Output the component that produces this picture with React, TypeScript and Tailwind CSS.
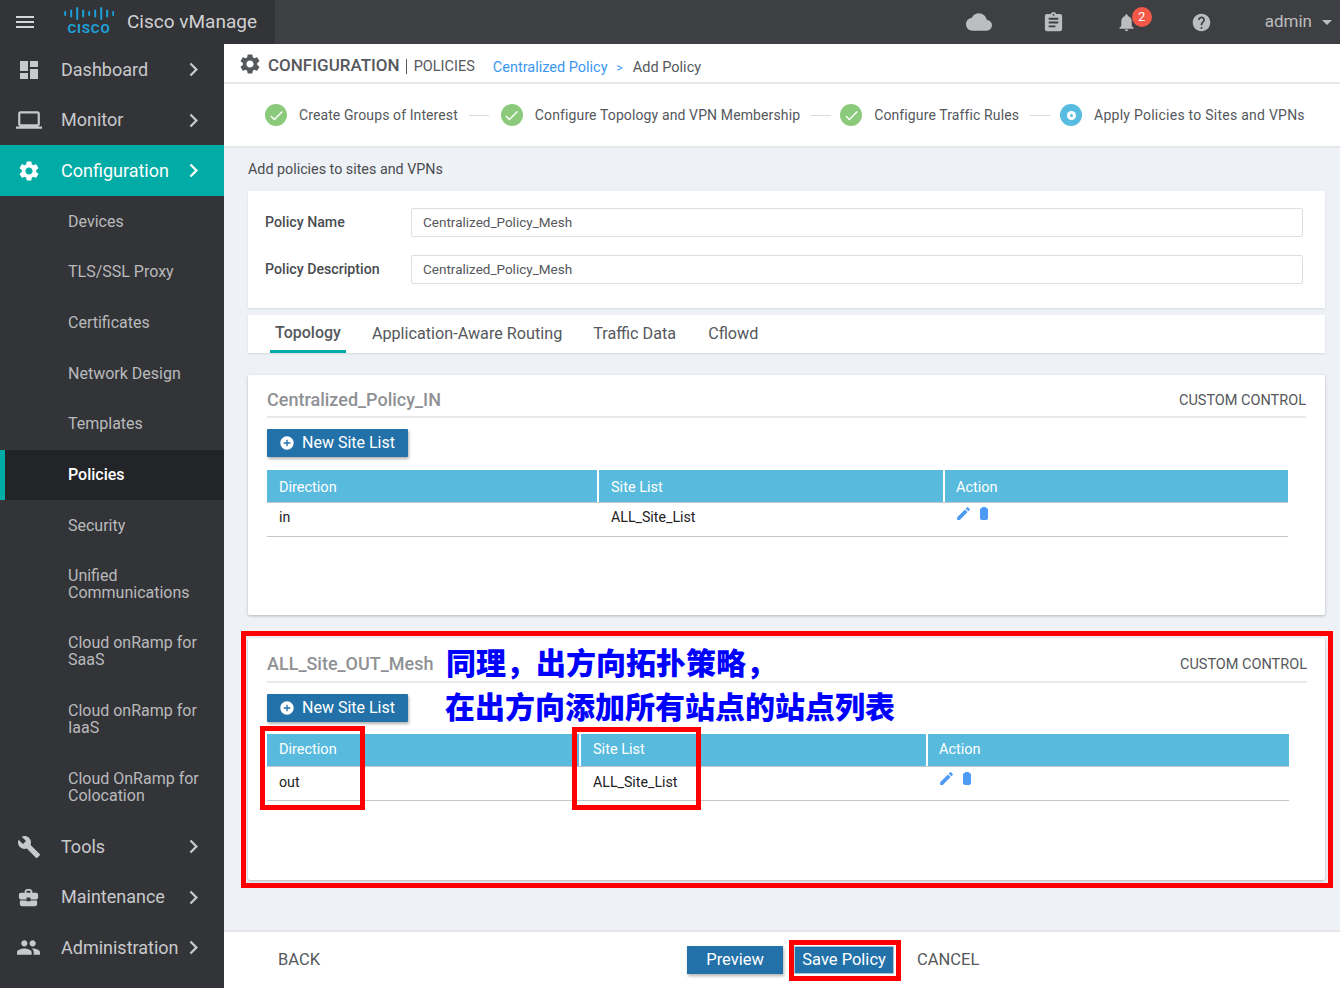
import {
  MdAddCircle,
  MdArrowDropDown,
  MdAssignment,
  MdBuild,
  MdBusinessCenter,
  MdCheck,
  MdChevronRight,
  MdCloud,
  MdDashboard,
  MdEdit,
  MdHelp,
  MdLaptop,
  MdMenu,
  MdNotifications,
  MdPeople,
  MdSettings,
} from "react-icons/md";

const fontStack = "font-['Roboto','Noto_Sans_CJK_SC',sans-serif]";

const subItems = [
  { label: "Devices", h: "h-[50px]" },
  { label: "TLS/SSL Proxy", h: "h-[51px]" },
  { label: "Certificates", h: "h-[51px]" },
  { label: "Network Design", h: "h-[50px]" },
  { label: "Templates", h: "h-[52px] pb-[2px]" },
  { label: "Policies", h: "h-[50px] pb-[2px]", active: true },
  { label: "Security", h: "h-[51px]" },
  { label: "Unified Communications", h: "h-[66px]" },
  { label: "Cloud onRamp for SaaS", h: "h-[68px]" },
  { label: "Cloud onRamp for IaaS", h: "h-[68px]" },
  { label: "Cloud OnRamp for Colocation", h: "h-[68px]" },
];

const steps = [
  { label: "Create Groups of Interest", done: true, gap: "mr-[12px]", track: "tracking-[0.1px]" },
  { label: "Configure Topology and VPN Membership", done: true, gap: "mr-[9px]", track: "tracking-[0.12px]" },
  { label: "Configure Traffic Rules", done: true, gap: "mr-[10px]", track: "tracking-[0.12px]" },
  { label: "Apply Policies to Sites and VPNs", done: false, gap: "", track: "tracking-[0.25px]" },
];

function CiscoLogo() {
  const bars = [5, 8, 13, 8, 5, 8, 13, 8, 5];
  return (
    <div className="flex w-[50px] flex-col items-center">
      <svg width="50" height="15" viewBox="0 0 50 15" className="block">
        {bars.map((h, i) => (
          <rect key={i} x={i * 6 + 0.2} y={7.5 - h / 2} width="2" height={h} rx="1" fill="#1ba0d7" />
        ))}
      </svg>
      <span className="text-[13.5px] leading-[14px] font-bold tracking-[0.8px] text-[#1ba0d7]">CISCO</span>
    </div>
  );
}

function TrashIcon() {
  return (
    <svg width="10" height="13" viewBox="0 0 10 13" className="block">
      <path d="M1 2.5 Q1 1 2.5 1 H3 V0 H7 V1 H7.5 Q9 1 9 2.5 V11 Q9 13 7 13 H3 Q1 13 1 11 Z" fill="#4e9bf5" />
    </svg>
  );
}

function MainItem({ label, icon, active, tall }: { label: string; icon: React.ReactNode; active?: boolean; tall?: boolean }) {
  return (
    <div className={`flex items-center ${tall ? "h-[51px]" : "h-[50px]"} ${active ? "bg-[#00aca5] text-white" : "text-[#c8c9cb]"}`}>
      <div className="flex w-[61px] justify-center pr-[4px]">{icon}</div>
      <span className="w-[123px] text-[18px] leading-none whitespace-nowrap">{label}</span>
      <MdChevronRight size={27} className="ml-[-4px]" />
    </div>
  );
}

function Sidebar() {
  return (
    <aside className="flex h-[944px] w-[224px] shrink-0 flex-col bg-[#333438]">
      <MainItem label="Dashboard" tall icon={<MdDashboard size={24} />} />
      <MainItem label="Monitor" icon={<MdLaptop size={26} />} />
      <MainItem label="Configuration" active tall icon={<MdSettings size={24} />} />
      {subItems.map((item) => (
        <div
          key={item.label}
          className={`flex items-center pr-[20px] ${item.h} ${
            item.active ? "border-l-[5px] border-[#00aca5] bg-[#232427] pl-[63px] font-medium text-white" : "pl-[68px] text-[#b9babc]"
          }`}
        >
          <span className="text-[16px] leading-[17px]">{item.label}</span>
        </div>
      ))}
      <MainItem label="Tools" tall icon={<MdBuild size={24} />} />
      <MainItem label="Maintenance" icon={<MdBusinessCenter size={23} />} />
      <MainItem label="Administration" tall icon={<MdPeople size={25} />} />
    </aside>
  );
}

function TopBar() {
  return (
    <header className="flex h-[44px] items-center bg-[#3e3f42] text-[#bcbdbf]">
      <div className="flex h-full w-[275px] items-center bg-[#333438]">
        <MdMenu size={24} className="ml-[13px] text-[#d5d6d7]" />
        <div className="mb-[4px] ml-[27px]">
          <CiscoLogo />
        </div>
        <span className="ml-[13px] text-[19px] whitespace-nowrap text-[#d0d1d2]">Cisco vManage</span>
      </div>
      <div className="flex-1" />
      <MdCloud size={26} className="mr-[50px]" />
      <MdAssignment size={23} className="mr-[51px]" />
      <div className="relative mr-[54px]">
        <MdNotifications size={21} />
        <span className="absolute left-[16px] top-[-5px] flex h-[20px] w-[20px] items-center justify-center rounded-full bg-[#f35746] text-[13px] text-white">
          2
        </span>
      </div>
      <MdHelp size={21} className="mr-[53px]" />
      <span className="text-[17px]">admin</span>
      <MdArrowDropDown size={24} className="ml-[3px] mr-[1px]" />
    </header>
  );
}

function Stepper() {
  return (
    <div className="flex h-[64px] items-center border-b-2 border-[#e6e7e9] bg-white pl-[41px] text-[14px] text-[#55585c]">
      {steps.map((step, i) => (
        <div key={step.label} className="flex items-center">
          {step.done ? (
            <span className="flex h-[22px] w-[22px] items-center justify-center rounded-full bg-[#8bc97b]">
              <MdCheck size={17} className="text-white" />
            </span>
          ) : (
            <span className="flex h-[22px] w-[22px] items-center justify-center rounded-full bg-[#57bcdf]">
              <span className="flex h-[9px] w-[9px] items-center justify-center rounded-full bg-white">
                <span className="h-[3px] w-[3px] rounded-full bg-[#57bcdf]" />
              </span>
            </span>
          )}
          <span className={`ml-[12px] whitespace-nowrap ${step.track}`}>{step.label}</span>
          {i < steps.length - 1 && <span className={`ml-[11px] h-px w-[20px] bg-[#d9dadc] ${step.gap}`} />}
        </div>
      ))}
    </div>
  );
}

function PolicyField({ label, value }: { label: string; value: string }) {
  return (
    <div className="flex items-center">
      <label className="w-[146px] text-[14.2px] font-medium text-[#4a4c50]">{label}</label>
      <div className="flex h-[29px] flex-1 items-center rounded-[2px] border border-[#dcdee1] px-[11px] text-[13.5px] text-[#55585c]">
        {value}
      </div>
    </div>
  );
}

function NewSiteListButton() {
  return (
    <button className="flex h-[28px] w-[141px] items-center rounded-[1px] bg-[#2272a9] pl-[12px] text-[16px] text-white shadow-[1px_2px_3px_rgba(0,0,0,0.3)]">
      <MdAddCircle size={16} />
      <span className="ml-[7px]">New Site List</span>
    </button>
  );
}

function PolicyTable({
  direction,
  col1,
  col2,
  width,
  iconPad,
  headPad,
  rowPad,
}: {
  direction: string;
  col1: string;
  col2: string;
  width: string;
  iconPad: string;
  headPad: string;
  rowPad: string;
}) {
  return (
    <div className={`${width} text-[14.2px]`}>
      <div className="flex h-[33px] border-b border-[#c4c6c8] bg-[#58bbdd] text-[14.5px] text-white">
        <div className={`${col1} ${headPad} flex items-center border-r-2 border-white pl-[12px]`}>Direction</div>
        <div className={`${col2} ${headPad} flex items-center border-r-2 border-white pl-[12px]`}>Site List</div>
        <div className={`${headPad} flex flex-1 items-center pl-[11px]`}>Action</div>
      </div>
      <div className="flex h-[34px] border-b border-[#c4c6c8] text-[#222]">
        <div className={`${col1} ${rowPad} flex items-center pl-[12px]`}>{direction}</div>
        <div className={`${col2} ${rowPad} flex items-center pl-[12px]`}>ALL_Site_List</div>
        <div className={`flex flex-1 items-start gap-[7px] pl-[10px] ${iconPad}`}>
          <MdEdit size={17} className="text-[#4e9bf5]" />
          <span className="mt-[2px]">
            <TrashIcon />
          </span>
        </div>
      </div>
    </div>
  );
}

function TopologyCard({
  title,
  direction,
  col1,
  col2,
  tableWidth,
  cardClass,
  headClass,
  buttonRow,
  iconPad,
  headPad,
  rowPad,
}: {
  title: string;
  direction: string;
  col1: string;
  col2: string;
  tableWidth: string;
  cardClass: string;
  headClass: string;
  buttonRow: string;
  iconPad: string;
  headPad: string;
  rowPad: string;
}) {
  return (
    <section className={`rounded-[2px] bg-white pl-[19px] shadow-[0_1px_3px_rgba(0,0,0,0.25)] ${cardClass}`}>
      <div className={`flex items-center justify-between border-b-2 border-[#e8e9eb] ${headClass}`}>
        <h2 className="pt-px text-[18px] font-medium text-[#8f9194]">{title}</h2>
        <span className="mt-[4px] text-[14.5px] text-[#55585c]">CUSTOM CONTROL</span>
      </div>
      <div className={buttonRow}>
        <NewSiteListButton />
      </div>
      <PolicyTable
        direction={direction}
        col1={col1}
        col2={col2}
        width={tableWidth}
        iconPad={iconPad}
        headPad={headPad}
        rowPad={rowPad}
      />
    </section>
  );
}

export default function App() {
  return (
    <div className={`relative h-[988px] w-[1340px] overflow-hidden bg-[#eef1f6] ${fontStack}`}>
      <TopBar />
      <div className="flex">
        <Sidebar />
        <main className="flex h-[944px] flex-1 flex-col">
          <div className="flex h-[40px] items-center border-b-2 border-[#e6e7e9] bg-white pl-[14px] pt-[6px] text-[#55585c]">
            <MdSettings size={24} className="mb-[4px] text-[#55585c]" />
            <span className="ml-[6px] text-[17px] font-medium">CONFIGURATION</span>
            <span className="ml-[6px] mr-[7px] h-[15px] w-px bg-[#55585c]" />
            <span className="mt-[2px] text-[14.5px]">POLICIES</span>
            <span className="ml-[18px] mt-[4px] text-[14.5px] text-[#3c97f0]">Centralized Policy</span>
            <span className="ml-[9px] mt-[4px] text-[12px] text-[#3c97f0]">&gt;</span>
            <span className="ml-[10px] mt-[4px] text-[14.5px]">Add Policy</span>
          </div>
          <Stepper />
          <div className="flex-1 pl-[24px] pr-[15px]">
            <p className="flex h-[43px] items-center text-[14.3px] text-[#4a4c50]">Add policies to sites and VPNs</p>
            <section className="flex h-[117px] flex-col gap-[18px] bg-white pl-[17px] pr-[22px] pt-[17px] shadow-[0_1px_2px_rgba(0,0,0,0.1)]">
              <PolicyField label="Policy Name" value="Centralized_Policy_Mesh" />
              <PolicyField label="Policy Description" value="Centralized_Policy_Mesh" />
            </section>
            <nav className="mt-[7px] flex h-[38px] items-center bg-white pl-[22px] text-[16.2px] text-[#55585c] shadow-[0_1px_2px_rgba(0,0,0,0.1)]">
              <span className="flex h-full items-center border-b-[3px] border-[#00aca5] px-[5px] pt-[1px] text-[16px] font-medium">Topology</span>
              <span className="ml-[26px]">Application-Aware Routing</span>
              <span className="ml-[31px]">Traffic Data</span>
              <span className="ml-[32px]">Cflowd</span>
            </nav>
            <div className="mt-[22px]">
              <TopologyCard
                title="Centralized_Policy_IN"
                direction="in"
                col1="w-[332px]"
                col2="w-[346px]"
                tableWidth="w-[1021px]"
                cardClass="h-[240px] pt-[3px] pr-[19px]"
                headClass="h-[40px] pt-[3px]"
                buttonRow="mt-[11px] mb-[13px]"
                iconPad="pt-[2px]"
                headPad="pt-[3px]"
                rowPad="pb-[4px]"
              />
            </div>
            <div className="mt-[23px]">
              <TopologyCard
                title="ALL_Site_OUT_Mesh"
                direction="out"
                col1="w-[314px]"
                col2="w-[347px]"
                tableWidth="w-[1022px]"
                cardClass="h-[242px] pt-[2px] pr-[18px]"
                headClass="h-[43px] pt-[5px]"
                buttonRow="mt-[11px] mb-[12px]"
                iconPad="pt-[3px]"
                headPad=""
                rowPad="pb-[2px]"
              />
            </div>
          </div>
          <footer className="flex h-[58px] items-center border-t-2 border-[#e6e7e9] bg-white pl-[54px] text-[16.5px] text-[#55585c]">
            <span className="pt-px">BACK</span>
            <button className="ml-[367px] h-[28px] w-[96px] bg-[#2272a9] text-white shadow-[1px_2px_3px_rgba(0,0,0,0.3)]">Preview</button>
            <button className="ml-[11px] h-[28px] w-[100px] border border-[#a9c9dd] bg-[#2272a9] text-white">Save Policy</button>
            <span className="ml-[23px] pt-px">CANCEL</span>
          </footer>
        </main>
      </div>

      {/* annotations drawn over the page */}
      <div className="absolute left-[241px] top-[631px] h-[257px] w-[1092px] border-[5px] border-[#ff0000]" />
      <div className="absolute left-[260px] top-[726px] h-[84px] w-[105px] border-[5px] border-[#ff0000]" />
      <div className="absolute left-[572px] top-[727px] h-[83px] w-[129px] border-[5px] border-[#ff0000]" />
      <div className="absolute left-[789px] top-[940px] h-[41px] w-[112px] border-[5px] border-[#ff0000]" />
      <p className="absolute left-[446px] top-[641px] font-['Noto_Sans_CJK_SC',sans-serif] text-[30px] leading-[40px] font-black text-[#0000ff]">同理，出方向拓扑策略，</p>
      <p className="absolute left-[445px] top-[685px] font-['Noto_Sans_CJK_SC',sans-serif] text-[30px] leading-[40px] font-black text-[#0000ff]">在出方向添加所有站点的站点列表</p>
    </div>
  );
}
